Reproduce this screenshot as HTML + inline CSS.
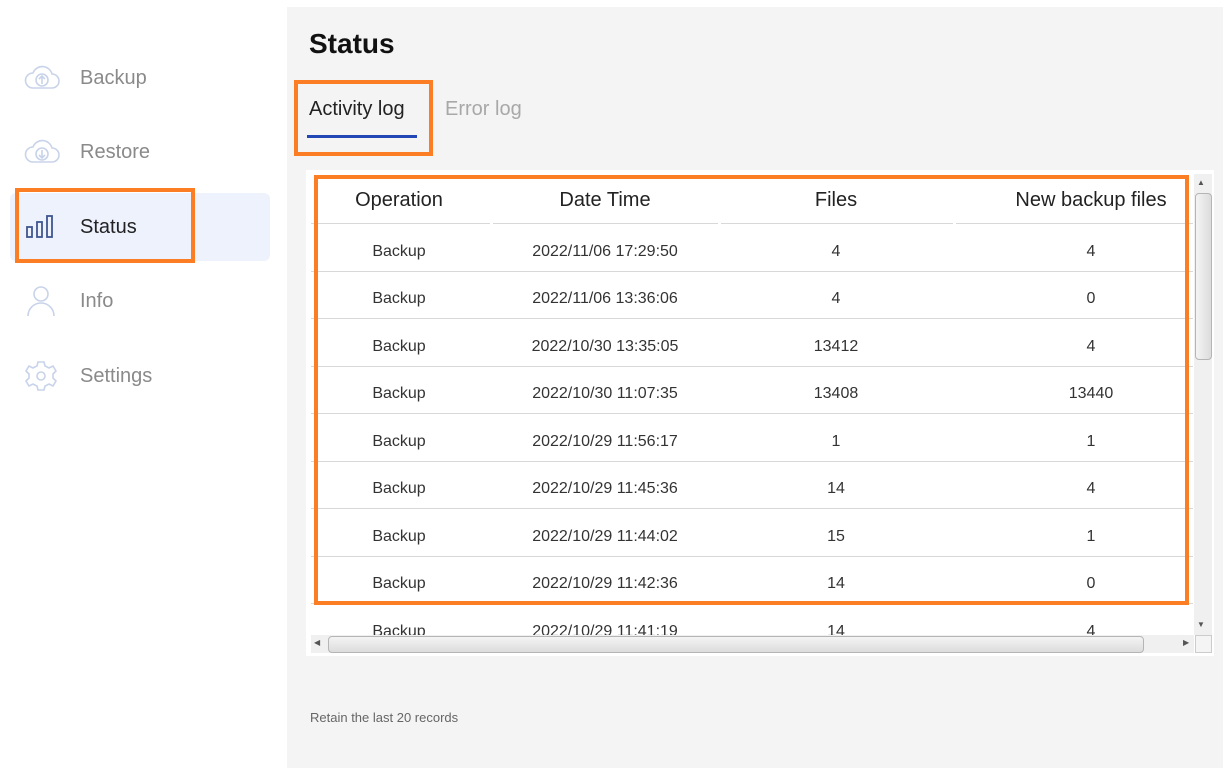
<!DOCTYPE html>
<html><head><style>
*{margin:0;padding:0;box-sizing:border-box}
body{width:1223px;height:768px;background:#fff;font-family:"Liberation Sans",sans-serif;position:relative;overflow:hidden;color:#222}
.side{position:absolute;left:0;top:0;width:287px;height:768px;background:#fff}
.item{position:absolute;left:80px;font-size:20px;color:#8a8a8a}
.ico{position:absolute;left:24px}
.sel{position:absolute;left:10px;top:193px;width:260px;height:68px;background:#edf2fd;border-radius:6px}
.main{position:absolute;left:287px;top:7px;width:936px;height:761px;background:#f4f4f4}
.ob{position:absolute;border:4px solid #fb7d24}
.card{position:absolute;left:306px;top:170px;width:908px;height:486px;background:#fff;overflow:hidden}
.c{position:absolute;font-size:16px;color:#333;text-align:center;transform:translateX(-50%);white-space:nowrap;margin-top:2px}
.h{font-size:20px;color:#222}
.line{position:absolute;left:311px;width:882px;height:1px;background:#d8d8d8}
</style></head><body>
<div class="side">
<div class="sel"></div>
<svg class="ico" style="top:62px" width="36" height="30" viewBox="0 0 36 30" fill="none" stroke="#c8d3ea" stroke-width="1.6"><path d="M9 26h19a7 7 0 0 0 0-14 10 10 0 0 0-19-1 7.5 7.5 0 0 0 0 15z"/><circle cx="18" cy="18" r="6"/><path d="M18 22v-8M15 17l3-3 3 3"/></svg>
<div class="item" style="top:67px">Backup</div>
<svg class="ico" style="top:136px" width="36" height="30" viewBox="0 0 36 30" fill="none" stroke="#c8d3ea" stroke-width="1.6"><path d="M9 26h19a7 7 0 0 0 0-14 10 10 0 0 0-19-1 7.5 7.5 0 0 0 0 15z"/><circle cx="18" cy="18" r="6"/><path d="M18 14v8M15 19l3 3 3-3"/></svg>
<div class="item" style="top:141px">Restore</div>
<svg class="ico" style="top:212px" width="36" height="30" viewBox="0 0 36 30" fill="none" stroke="#3f5590" stroke-width="1.8"><rect x="3" y="15" width="5" height="10"/><rect x="13" y="10" width="5" height="15"/><rect x="23" y="4" width="5" height="21"/></svg>
<div class="item" style="top:216px;color:#222">Status</div>
<svg class="ico" style="top:284px" width="36" height="34" viewBox="0 0 36 34" fill="none" stroke="#c8d3ea" stroke-width="1.6"><circle cx="17" cy="10" r="7"/><path d="M4 32a13 13 0 0 1 26 0"/></svg>
<div class="item" style="top:290px">Info</div>
<svg class="ico" style="top:360px" width="36" height="32" viewBox="0 0 36 32" fill="none" stroke="#c8d3ea" stroke-width="1.6"><path d="M14 2h6l1 4 4 2 4-2 3 5-3 3v4l3 3-3 5-4-2-4 2-1 4h-6l-1-4-4-2-4 2-3-5 3-3v-4l-3-3 3-5 4 2 4-2z"/><circle cx="17" cy="16" r="4"/></svg>
<div class="item" style="top:365px">Settings</div>
</div>
<div class="main">
<div style="position:absolute;left:22px;top:21px;font-size:28px;font-weight:bold;color:#111">Status</div>
<div style="position:absolute;left:22px;top:91px;font-size:20px;color:#222">Activity log</div>
<div style="position:absolute;left:20px;top:128px;width:110px;height:3px;background:#2147b5"></div>
<div style="position:absolute;left:158px;top:91px;font-size:20px;color:#a8a8a8">Error log</div>
<div style="position:absolute;left:23px;top:703px;font-size:13px;color:#666">Retain the last 20 records</div>
</div>
<div class="card"></div>
<div class="c h" style="left:399px;top:187px">Operation</div>
<div class="c h" style="left:605px;top:187px">Date Time</div>
<div class="c h" style="left:836px;top:187px">Files</div>
<div class="c h" style="left:1091px;top:187px">New backup files</div>
<div class="line" style="top:223px"></div>
<div style="position:absolute;left:490px;top:222px;width:3px;height:2px;background:#fff"></div>
<div style="position:absolute;left:718px;top:222px;width:3px;height:2px;background:#fff"></div>
<div style="position:absolute;left:953px;top:222px;width:3px;height:2px;background:#fff"></div>
<div class="line" style="top:271px"></div><div class="line" style="top:318px"></div><div class="line" style="top:366px"></div><div class="line" style="top:413px"></div><div class="line" style="top:461px"></div><div class="line" style="top:508px"></div><div class="line" style="top:556px"></div><div class="line" style="top:603px"></div>
<div class="c" style="left:399px;top:241px">Backup</div><div class="c" style="left:605px;top:241px">2022/11/06 17:29:50</div><div class="c" style="left:836px;top:241px">4</div><div class="c" style="left:1091px;top:241px">4</div>
<div class="c" style="left:399px;top:288px">Backup</div><div class="c" style="left:605px;top:288px">2022/11/06 13:36:06</div><div class="c" style="left:836px;top:288px">4</div><div class="c" style="left:1091px;top:288px">0</div>
<div class="c" style="left:399px;top:336px">Backup</div><div class="c" style="left:605px;top:336px">2022/10/30 13:35:05</div><div class="c" style="left:836px;top:336px">13412</div><div class="c" style="left:1091px;top:336px">4</div>
<div class="c" style="left:399px;top:383px">Backup</div><div class="c" style="left:605px;top:383px">2022/10/30 11:07:35</div><div class="c" style="left:836px;top:383px">13408</div><div class="c" style="left:1091px;top:383px">13440</div>
<div class="c" style="left:399px;top:431px">Backup</div><div class="c" style="left:605px;top:431px">2022/10/29 11:56:17</div><div class="c" style="left:836px;top:431px">1</div><div class="c" style="left:1091px;top:431px">1</div>
<div class="c" style="left:399px;top:478px">Backup</div><div class="c" style="left:605px;top:478px">2022/10/29 11:45:36</div><div class="c" style="left:836px;top:478px">14</div><div class="c" style="left:1091px;top:478px">4</div>
<div class="c" style="left:399px;top:526px">Backup</div><div class="c" style="left:605px;top:526px">2022/10/29 11:44:02</div><div class="c" style="left:836px;top:526px">15</div><div class="c" style="left:1091px;top:526px">1</div>
<div class="c" style="left:399px;top:573px">Backup</div><div class="c" style="left:605px;top:573px">2022/10/29 11:42:36</div><div class="c" style="left:836px;top:573px">14</div><div class="c" style="left:1091px;top:573px">0</div>
<div style="position:absolute;left:311px;top:620px;width:882px;height:16px;overflow:hidden">
<div class="c" style="left:88px;top:1px">Backup</div><div class="c" style="left:294px;top:1px">2022/10/29 11:41:19</div><div class="c" style="left:525px;top:1px">14</div><div class="c" style="left:780px;top:1px">4</div></div>
<div style="position:absolute;left:1194px;top:174px;width:18px;height:461px;background:#f0f0f0"></div>
<div style="position:absolute;left:1197px;top:178px;font-size:8px;color:#555">▲</div>
<div style="position:absolute;left:1197px;top:620px;font-size:8px;color:#555">▼</div>
<div style="position:absolute;left:1195px;top:193px;width:17px;height:167px;background:linear-gradient(90deg,#f4f4f4,#dcdcdc);border:1px solid #b5b5b5;border-radius:4px"></div>
<div style="position:absolute;left:311px;top:635px;width:883px;height:18px;background:#f0f0f0"></div>
<div style="position:absolute;left:314px;top:638px;font-size:8px;color:#555">◀</div>
<div style="position:absolute;left:1183px;top:638px;font-size:8px;color:#555">▶</div>
<div style="position:absolute;left:328px;top:636px;width:816px;height:17px;background:linear-gradient(#f4f4f4,#dcdcdc);border:1px solid #b5b5b5;border-radius:4px"></div>
<div style="position:absolute;left:1195px;top:635px;width:17px;height:18px;background:#f4f4f4;border:1px solid #ccc"></div>
<div class="ob" style="left:15px;top:188px;width:180px;height:75px"></div>
<div class="ob" style="left:294px;top:80px;width:139px;height:76px"></div>
<div class="ob" style="left:314px;top:175px;width:875px;height:430px"></div>
</body></html>
